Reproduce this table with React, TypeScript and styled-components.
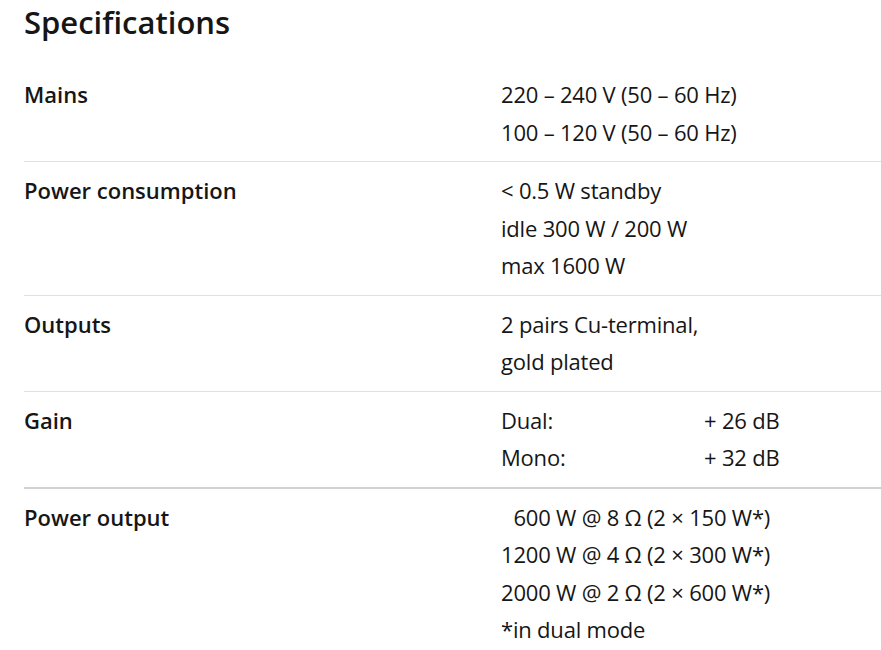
import React from "react";
import styled, { createGlobalStyle } from "styled-components";

const Global = createGlobalStyle`
  html, body { margin: 0; padding: 0; background: #fff; }
  body { font-family: "Open Sans", Lato, sans-serif; color: #161616; }
`;

const Page = styled.div`
  padding: 0 0 0 24px;
`;

const Title = styled.h2`
  margin: 0;
  font-size: 31px;
  font-weight: 600;
  line-height: 44px;
  height: 66px;
`;

const Row = styled.div<{ $thick?: boolean }>`
  display: grid;
  grid-template-columns: 477px 1fr;
  padding: 10px 0;
  border-bottom: ${(p) => (p.$thick ? "2px solid #d2d2d2" : "1px solid #e0e0e0")};
  &:last-child { border-bottom: none; }
  font-size: 22px;
  line-height: 37.5px;
`;

const Label = styled.div`
  font-weight: 600;
`;

const Value = styled.div`
  letter-spacing: -0.2px;
`;

const Line = styled.div``;

const Pair = styled.div`
  display: grid;
  grid-template-columns: 203px auto;
`;

const specs: { label: string; lines?: string[]; pairs?: [string, string][]; thick?: boolean }[] = [
  { label: "Mains", lines: ["220 – 240 V (50 – 60 Hz)", "100 – 120 V (50 – 60 Hz)"] },
  { label: "Power consumption", lines: ["< 0.5 W standby", "idle 300 W / 200 W", "max 1600 W"] },
  { label: "Outputs", lines: ["2 pairs Cu-terminal,", "gold plated"] },
  { label: "Gain", pairs: [["Dual:", "+ 26 dB"], ["Mono:", "+ 32 dB"]], thick: true },
  {
    label: "Power output",
    lines: [
      "\u2007600 W @ 8 Ω (2 × 150 W*)",
      "1200 W @ 4 Ω (2 × 300 W*)",
      "2000 W @ 2 Ω (2 × 600 W*)",
      "*in dual mode",
    ],
  },
];

export default function App() {
  return (
    <Page>
      <Global />
      <Title>Specifications</Title>
      {specs.map((s) => (
        <Row key={s.label} $thick={s.thick}>
          <Label>{s.label}</Label>
          <Value>
            {s.lines?.map((l) => <Line key={l}>{l}</Line>)}
            {s.pairs?.map(([a, b]) => (
              <Pair key={a}>
                <span>{a}</span>
                <span>{b}</span>
              </Pair>
            ))}
          </Value>
        </Row>
      ))}
    </Page>
  );
}
